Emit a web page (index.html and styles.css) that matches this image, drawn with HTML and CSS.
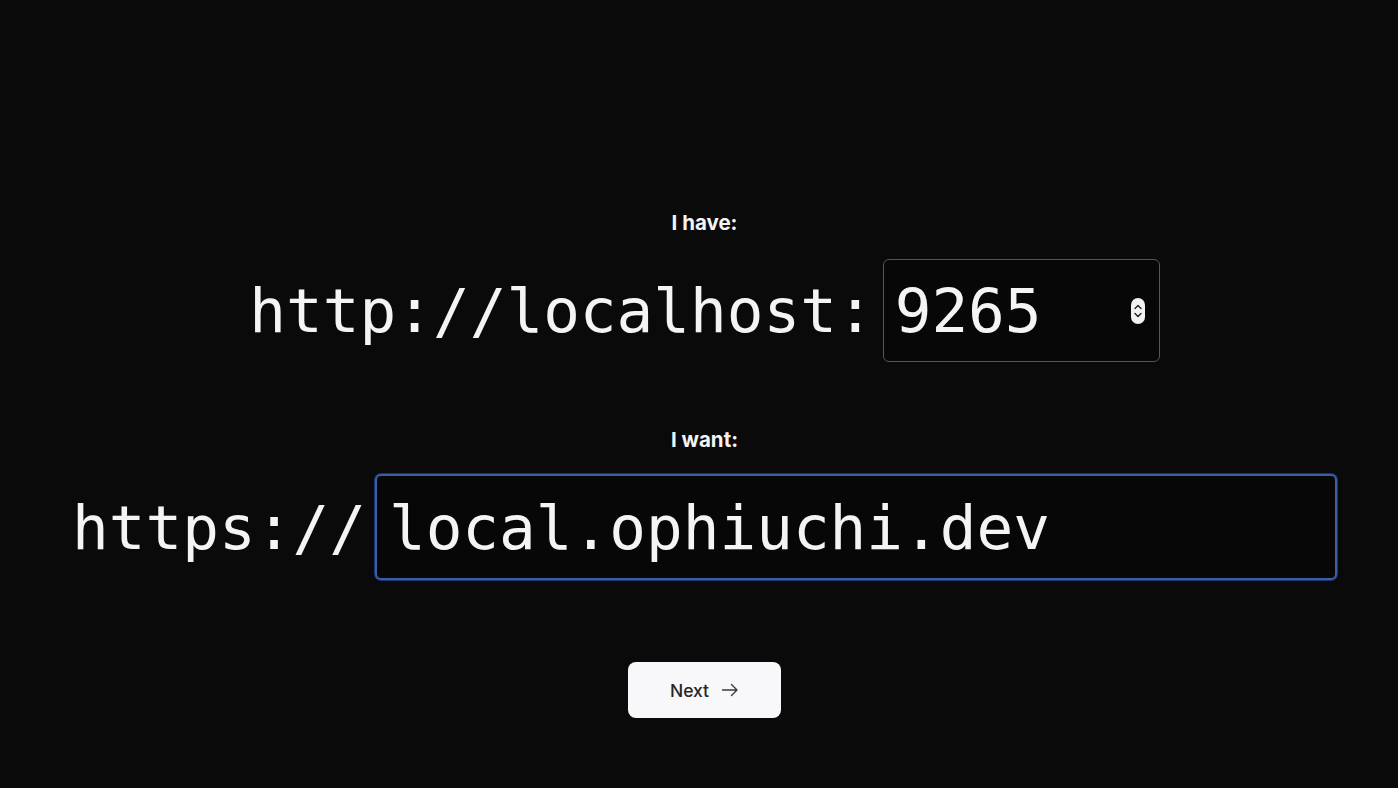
FILE: index.html
```html
<!DOCTYPE html>
<html lang="en">
<head>
<meta charset="utf-8">
<title>Ophiuchi</title>
<link rel="stylesheet" href="styles.css">
</head>
<body>
<main class="main">
  <div class="label">I have:</div>
  <div class="row row-have">
    <span class="prefix">http://localhost:</span>
    <div class="field field-port">
      <span class="value">9265</span>
      <span class="spinner">
        <svg width="14" height="26" viewBox="0 0 14 26"><rect x="0" y="0" width="14" height="26" rx="7" fill="#f2f2f2"/><path d="M4 10.5 L7 7.5 L10 10.5" fill="none" stroke="#1a1a1a" stroke-width="1.3" stroke-linecap="round" stroke-linejoin="round"/><path d="M4 15.5 L7 18.5 L10 15.5" fill="none" stroke="#1a1a1a" stroke-width="1.3" stroke-linecap="round" stroke-linejoin="round"/></svg>
      </span>
    </div>
  </div>
  <div class="label label-want">I want:</div>
  <div class="row row-want">
    <span class="prefix">https://</span>
    <div class="field field-domain">
      <span class="value">local.ophiuchi.dev</span>
    </div>
  </div>
  <button class="next-btn" type="button">
    <span>Next</span>
    <svg width="18" height="18" viewBox="0 0 18 18"><path d="M1.5 9 H16 M10.5 3.5 L16 9 L10.5 14.5" fill="none" stroke="#3a3a3f" stroke-width="1.4" stroke-linecap="round" stroke-linejoin="round"/></svg>
  </button>
</main>
</body>
</html>
```

FILE: styles.css
```css
html, body {
  margin: 0;
  padding: 0;
  background: #0a0a0b;
  height: 100%;
}

body {
  font-family: Inter, "Noto Sans", sans-serif;
  color: #f4f4f5;
}

.main {
  display: flex;
  flex-direction: column;
  align-items: center;
  padding-top: 209px;
  padding-left: 11px;
}

.label {
  font-size: 20.5px;
  font-weight: 700;
  line-height: 28px;
  color: #f4f4f5;
  margin-bottom: 22px;
}

.label-want {
  margin-top: 64px;
  margin-bottom: 20px;
}

.row {
  display: flex;
  align-items: center;
  font-family: "DejaVu Sans Mono", "Liberation Mono", monospace;
  font-size: 61px;
  color: #f4f4f5;
  gap: 9px;
}

.field {
  display: flex;
  align-items: center;
  justify-content: space-between;
  box-sizing: border-box;
  background: #070708;
  border-radius: 6px;
}

.field-port {
  width: 277px;
  height: 103px;
  border: 1px solid #56565a;
  padding: 0 14px 0 11px;
}

.field-domain {
  width: 962px;
  height: 106px;
  border: 2px solid #3c5ea6;
  box-shadow: 0 0 0 1px #1c3470;
  padding: 0 12px;
}

.spinner {
  display: flex;
  align-items: center;
}

.next-btn {
  margin-top: 82px;
  width: 153px;
  height: 56px;
  border: none;
  border-radius: 8px;
  background: #f8f8fa;
  display: flex;
  align-items: center;
  justify-content: center;
  gap: 12px;
  font-family: Inter, "Noto Sans", sans-serif;
  font-size: 17.5px;
  font-weight: 500;
  color: #27272a;
  padding: 0;
}
```
